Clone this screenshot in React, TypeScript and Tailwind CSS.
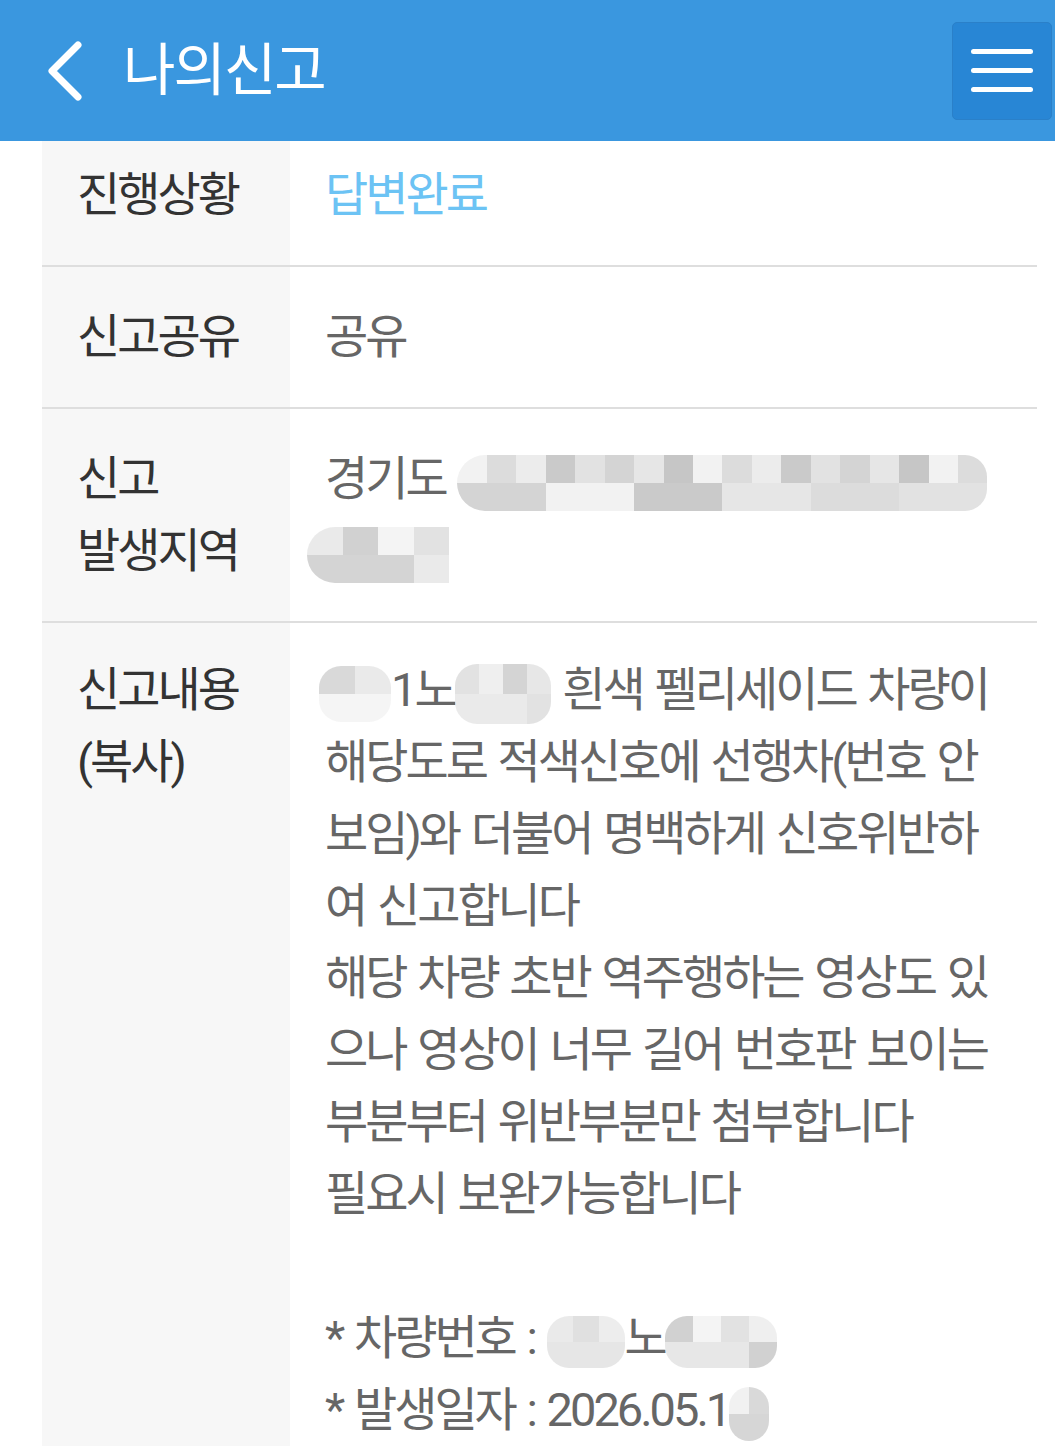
import React from "react";

const greys = ["#d4d4d4", "#e2e2e2", "#cacaca", "#ececec", "#dcdcdc", "#f2f2f2", "#c6c6c6", "#e6e6e6"];

function Blur({ w, h, cols, rows, seed = 0, className = "" }: { w: number; h: number; cols: number; rows: number; seed?: number; className?: string }) {
  const cells = [];
  for (let r = 0; r < rows; r++) {
    for (let c = 0; c < cols; c++) {
      const i = (c * 7 + r * 3 + seed * 5 + ((c * r) % 3)) % greys.length;
      cells.push(<span key={r + "-" + c} style={{ background: greys[i] }} />);
    }
  }
  return (
    <span
      className={"inline-grid align-middle overflow-hidden rounded-[22px] " + className}
      style={{ width: w, height: h, gridTemplateColumns: `repeat(${cols}, 1fr)`, gridTemplateRows: `repeat(${rows}, 1fr)` }}
    >
      {cells}
    </span>
  );
}

function Row({ label, children, top = "pt-[34px]", last = false }: { label: React.ReactNode; children: React.ReactNode; top?: string; last?: boolean }) {
  return (
    <div className={"flex " + (last ? "" : "border-b-2 border-[#dedede]")}>
      <div className={"w-[248px] shrink-0 bg-[#f7f7f7] pl-[35px] pb-[34px] text-[#333] " + top}>{label}</div>
      <div className={"flex-1 pl-[35px] pb-[34px] text-[#666] " + top}>{children}</div>
    </div>
  );
}

export default function App() {
  return (
    <div
      className="min-h-[1446px] bg-white text-[47px] leading-[72px] tracking-[-3px] [word-spacing:3px]"
      style={{ fontFamily: "Roboto, 'Noto Sans CJK KR', 'Noto Sans', sans-serif" }}
    >
      <header className="flex h-[141px] items-center bg-[#3a97df] pl-[44px] pr-[3px]">
        <svg width="44" height="60" viewBox="0 0 44 60" className="shrink-0">
          <path d="M34 4 L8 30 L34 56" fill="none" stroke="#fff" strokeWidth="7" strokeLinecap="round" strokeLinejoin="round" />
        </svg>
        <h1 className="ml-[35px] text-[57px] leading-none tracking-[-2px] text-white">나의신고</h1>
        <button className="ml-auto flex h-[98px] w-[100px] flex-col items-center justify-center gap-[14px] rounded-[5px] border border-[#2a80c9] bg-[#2886d5]">
          <span className="block h-[5px] w-[62px] rounded-full bg-white" />
          <span className="block h-[5px] w-[62px] rounded-full bg-white" />
          <span className="block h-[5px] w-[62px] rounded-full bg-white" />
        </button>
      </header>

      <main className="ml-[42px] mr-[18px]">
        <Row label="진행상황" top="pt-[18px]">
          <span className="text-[#6cc3f4]">답변완료</span>
        </Row>
        <Row label="신고공유">공유</Row>
        <Row
          label={
            <>
              <div>신고</div>
              <div>발생지역</div>
            </>
          }
        >
          <div className="whitespace-nowrap">
            경기도 <Blur w={530} h={56} cols={18} rows={2} seed={1} className="rounded-l-[28px]" />
          </div>
          <div className="-ml-[18px] whitespace-nowrap">
            <Blur w={142} h={56} cols={4} rows={2} seed={3} className="rounded-l-[40px] rounded-r-none opacity-80" />
          </div>
        </Row>
        <Row
          last
          top="pt-[31px]"
          label={
            <>
              <div>신고내용</div>
              <div>(복사)</div>
            </>
          }
        >
          <div className="min-h-[900px] whitespace-nowrap">
            <div className="-ml-[6px]">
              <Blur w={72} h={56} cols={2} rows={2} seed={2} className="opacity-70" />
              1노
              <Blur w={96} h={60} cols={4} rows={2} seed={4} className="opacity-80" /> 흰색 펠리세이드 차량이
            </div>
            <div>해당도로 적색신호에 선행차(번호 안</div>
            <div>보임)와 더불어 명백하게 신호위반하</div>
            <div>여 신고합니다</div>
            <div>해당 차량 초반 역주행하는 영상도 있</div>
            <div>으나 영상이 너무 길어 번호판 보이는</div>
            <div>부분부터 위반부분만 첨부합니다</div>
            <div>필요시 보완가능합니다</div>
            <div>&nbsp;</div>
            <div>
              * 차량번호 : <Blur w={78} h={52} cols={3} rows={2} seed={5} className="opacity-70" />노
              <Blur w={112} h={52} cols={4} rows={2} seed={6} className="opacity-80" />
            </div>
            <div>
              * 발생일자 : 2026.05.1
              <Blur w={40} h={54} cols={2} rows={2} seed={7} className="opacity-70" />
            </div>
          </div>
        </Row>
      </main>
    </div>
  );
}
